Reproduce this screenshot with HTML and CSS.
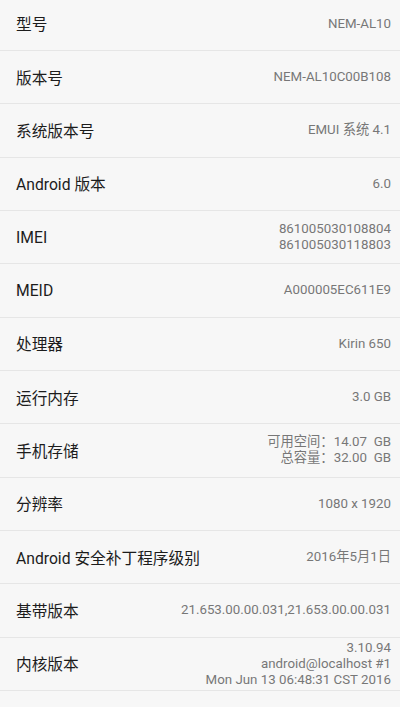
FILE: index.html
```html
<!DOCTYPE html>
<html lang="zh-CN">
<head>
  <meta charset="UTF-8">
  <meta name="viewport" content="width=device-width, initial-scale=1.0">
  <link rel="stylesheet" href="styles.css">
</head>
<body>

<div class="list">
  <div class="row"><div class="label">型号</div><div class="value">NEM-AL10</div></div>
  <div class="row"><div class="label">版本号</div><div class="value">NEM-AL10C00B108</div></div>
  <div class="row"><div class="label">系统版本号</div><div class="value">EMUI 系统 4.1</div></div>
  <div class="row"><div class="label">Android 版本</div><div class="value">6.0</div></div>
  <div class="row"><div class="label">IMEI</div><div class="value">861005030108804<br>861005030118803</div></div>
  <div class="row"><div class="label">MEID</div><div class="value">A000005EC611E9</div></div>
  <div class="row"><div class="label">处理器</div><div class="value">Kirin 650</div></div>
  <div class="row"><div class="label">运行内存</div><div class="value">3.0 GB</div></div>
  <div class="row"><div class="label">手机存储</div><div class="value pre">可用空间：14.07  GB
总容量：32.00  GB</div></div>
  <div class="row"><div class="label">分辨率</div><div class="value">1080 x 1920</div></div>
  <div class="row"><div class="label">Android 安全补丁程序级别</div><div class="value">2016年5月1日</div></div>
  <div class="row"><div class="label">基带版本</div><div class="value">21.653.00.00.031,21.653.00.00.031</div></div>
  <div class="row"><div class="label">内核版本</div><div class="value">3.10.94<br>android@localhost #1<br>Mon Jun 13 06:48:31 CST 2016</div></div>
</div>

</body>
</html>
```

FILE: styles.css
```css
body {
  margin: 0;
  background-color: #f7f7f7;
  font-family: Roboto, "Noto Sans CJK SC", sans-serif;
  overflow: hidden;
}

.list {
  margin-top: -2.33px;
}

.row {
  display: flex;
  align-items: center;
  justify-content: space-between;
  height: 52.33px;
  padding: 0 9px 0 16px;
  border-bottom: 1px solid #e6e6e6;
}

.label {
  font-size: 15.7px;
  color: #1c1c1c;
  white-space: nowrap;
}

.value {
  font-size: 13.3px;
  line-height: 16px;
  color: #777777;
  text-align: right;
}

.pre {
  white-space: pre;
}
```
